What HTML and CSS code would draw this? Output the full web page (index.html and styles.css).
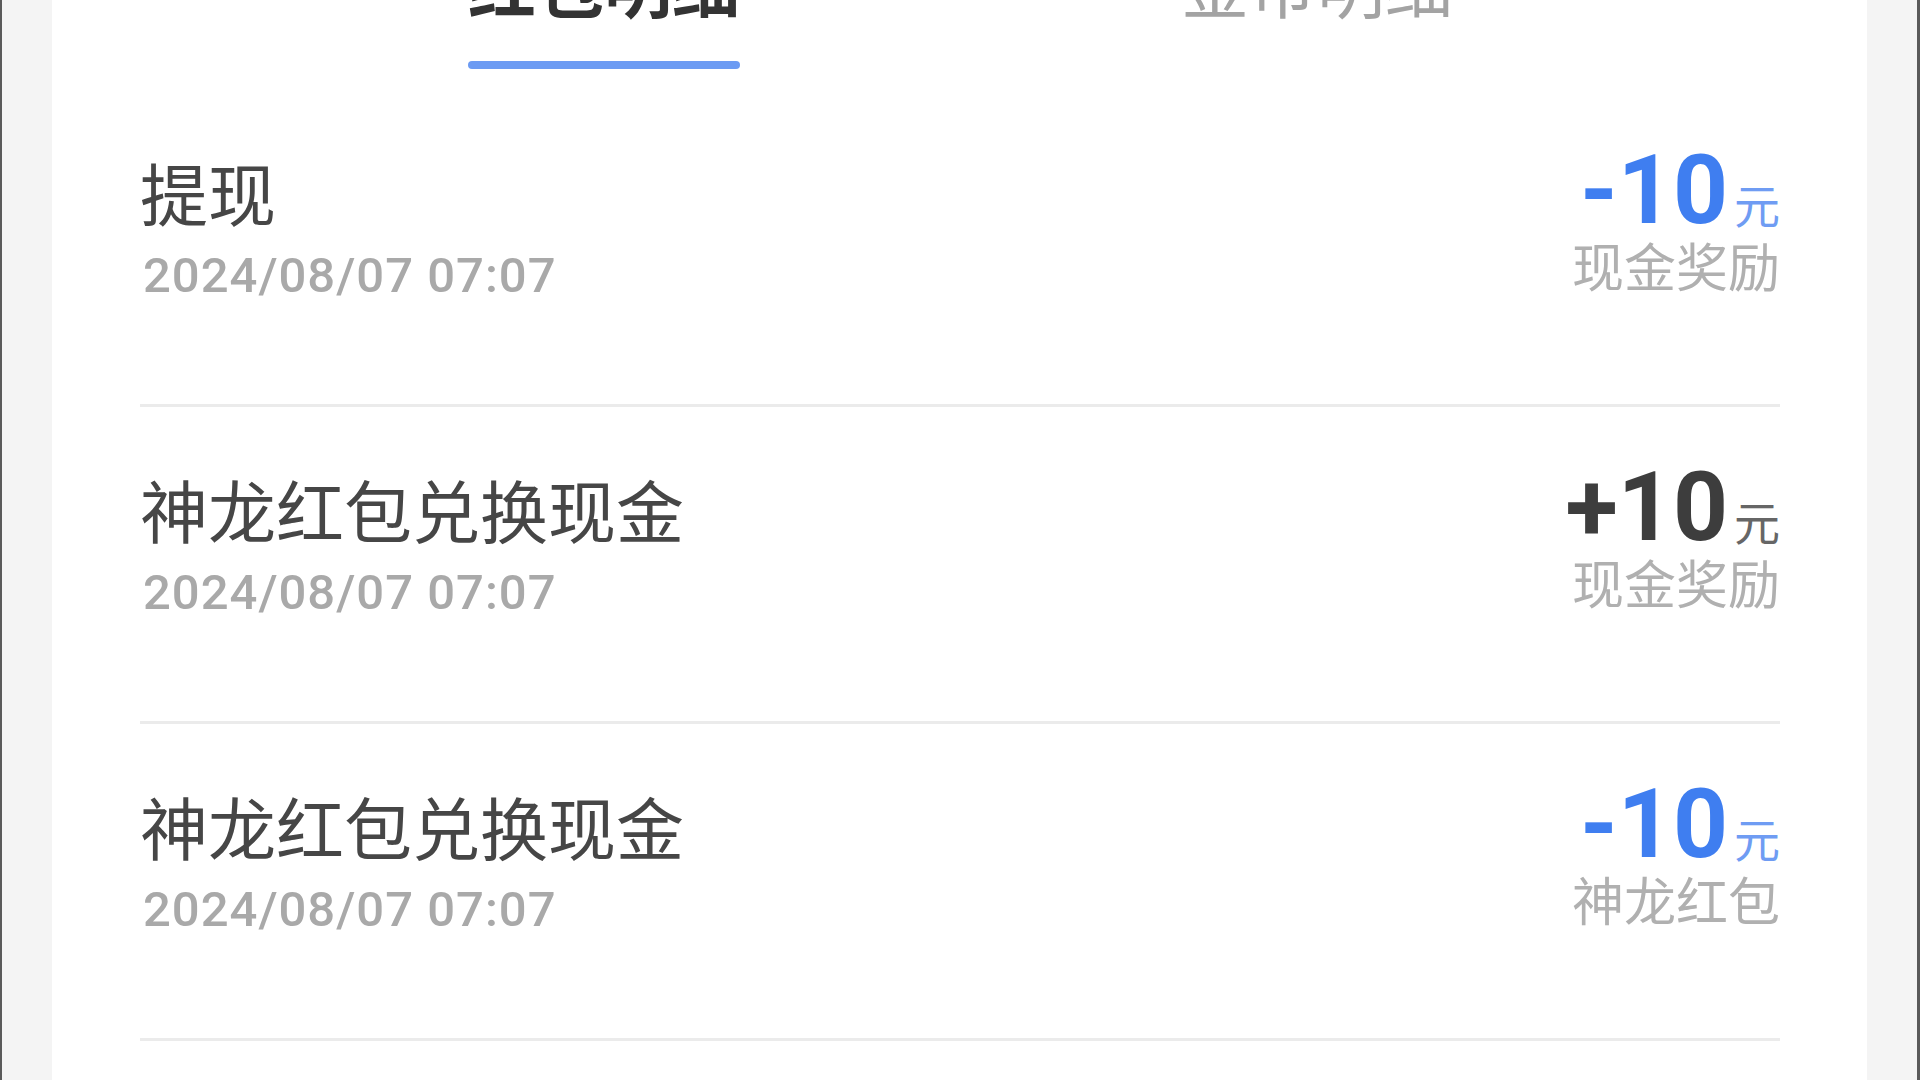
FILE: index.html
```html
<!DOCTYPE html>
<html lang="zh-CN">
<head>
<meta charset="utf-8">
<title>红包明细</title>
<link rel="stylesheet" href="styles.css">
</head>
<body>
<div class="frame">
  <div class="card">
    <div class="tabs">
      <div class="tab active">
        <span class="tab-text">红包明细</span>
        <span class="tab-bar"></span>
      </div>
      <div class="tab">
        <span class="tab-text">金币明细</span>
      </div>
    </div>
    <ul class="list">
      <li class="row">
        <div class="info">
          <div class="title">提现</div>
          <div class="date">2024/08/07 07:07</div>
        </div>
        <div class="money">
          <div class="amount minus"><span class="num">-10</span><span class="unit">元</span></div>
          <div class="kind">现金奖励</div>
        </div>
      </li>
      <li class="row">
        <div class="info">
          <div class="title">神龙红包兑换现金</div>
          <div class="date">2024/08/07 07:07</div>
        </div>
        <div class="money">
          <div class="amount plus"><span class="num">+10</span><span class="unit">元</span></div>
          <div class="kind">现金奖励</div>
        </div>
      </li>
      <li class="row">
        <div class="info">
          <div class="title">神龙红包兑换现金</div>
          <div class="date">2024/08/07 07:07</div>
        </div>
        <div class="money">
          <div class="amount minus"><span class="num">-10</span><span class="unit">元</span></div>
          <div class="kind">神龙红包</div>
        </div>
      </li>
    </ul>
  </div>
</div>
</body>
</html>
```

FILE: styles.css
```css
html, body {
  margin: 0;
  padding: 0;
  height: 100%;
  overflow: hidden;
  background: #f4f4f4;
}

.frame {
  box-sizing: border-box;
  width: 1920px;
  height: 1080px;
  border-left: 2px solid #5a5a5a;
  border-right: 3px solid #5a5a5a;
  padding: 0 50px;
  background: #f4f4f4;
  overflow: hidden;
}

.card {
  box-sizing: border-box;
  height: 100%;
  display: flex;
  flex-direction: column;
  background: #ffffff;
  padding: 0 87px 0 89px;
  font-family: "Noto Sans CJK SC", "Noto Sans", sans-serif;
}

.tabs {
  display: flex;
  justify-content: center;
  margin-top: -50px;
  padding-bottom: 21px;
}

.tab {
  width: 713px;
  display: flex;
  flex-direction: column;
  align-items: center;
}

.tab-text {
  font-size: 68px;
  line-height: 68px;
  color: #a3a3a3;
  font-weight: 400;
}

.tab.active .tab-text {
  color: #333333;
  font-weight: 700;
}

.tab-bar {
  display: block;
  width: 272px;
  height: 8px;
  margin-top: 43px;
  border-radius: 4px;
  background: #6c9bf3;
}

.list {
  list-style: none;
  margin: 0 0 0 -1px;
  padding: 0;
}

.row {
  box-sizing: border-box;
  height: 317px;
  padding-top: 68px;
  border-bottom: 3px solid #ebebeb;
  display: flex;
  justify-content: space-between;
  align-items: flex-start;
}

.info {
  display: flex;
  flex-direction: column;
}

.title {
  font-size: 68px;
  line-height: 68px;
  color: #464646;
  font-weight: 400;
}

.date {
  margin-top: 20px;
  margin-left: 3px;
  font-family: Roboto, "Liberation Sans", sans-serif;
  font-size: 49px;
  line-height: 60px;
  font-weight: 500;
  letter-spacing: 1px;
  color: #a9a9a9;
}

.money {
  display: flex;
  flex-direction: column;
  align-items: flex-end;
  margin-top: -3px;
}

.amount {
  display: flex;
  align-items: baseline;
  white-space: nowrap;
}

.num {
  font-family: Roboto, "Liberation Sans", sans-serif;
  font-size: 96px;
  line-height: 70px;
  font-weight: 700;
}

.unit {
  font-family: "Noto Sans CJK SC", sans-serif;
  font-size: 46px;
  line-height: 46px;
  margin-left: 6px;
}

.amount.minus .num {
  color: #3f7ef0;
}

.amount.minus .unit {
  color: #6f9cf3;
}

.amount.plus .num {
  color: #3d3d3d;
}

.amount.plus .unit {
  color: #666666;
}

.kind {
  margin-top: 13px;
  font-size: 52px;
  line-height: 52px;
  color: #b0b0b0;
}
```
